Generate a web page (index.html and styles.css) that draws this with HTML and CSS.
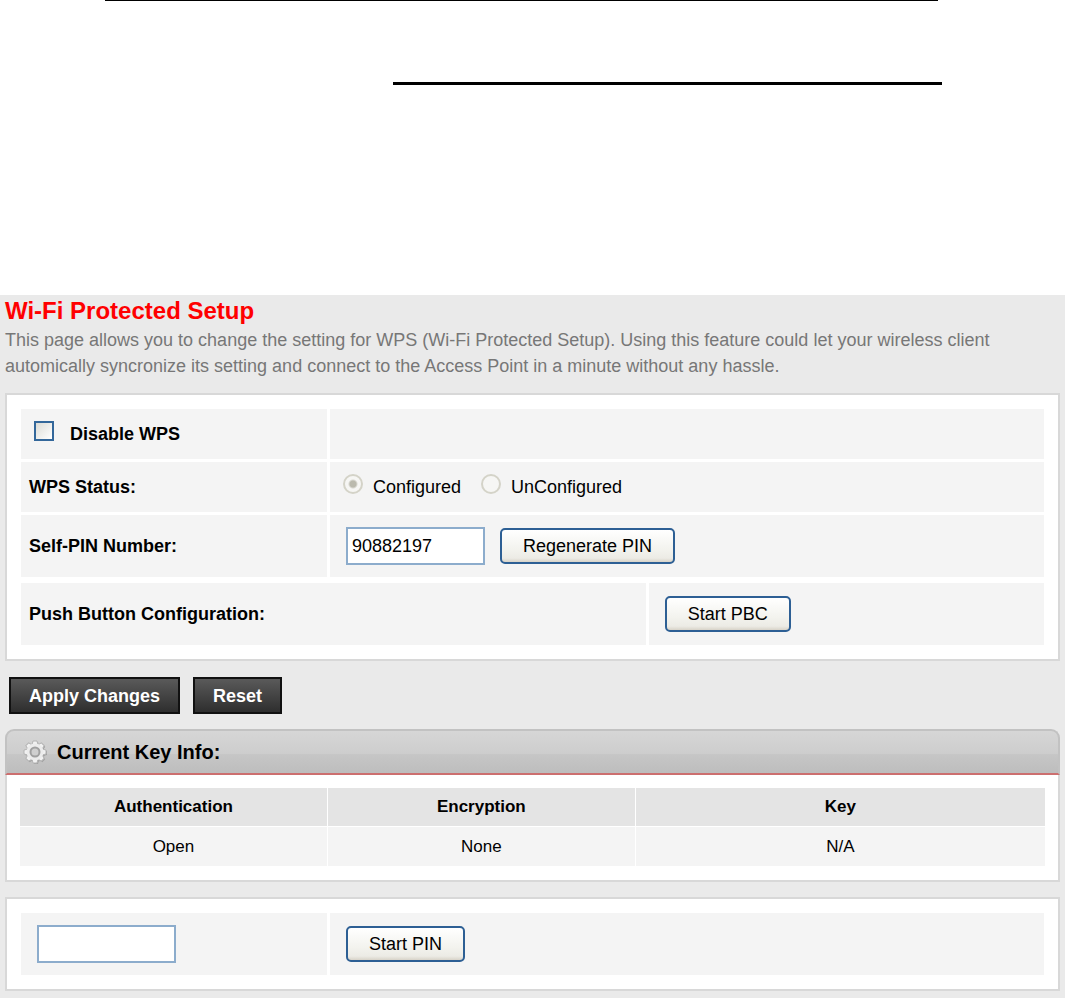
FILE: index.html
```
<!DOCTYPE html>
<html lang="en">
    <head>
        <meta charset="UTF-8">
        <title>Wi-Fi Protected Setup</title>
        <link rel="stylesheet" href="styles.css">
    </head>
    <body>
        <div class="rules">
            <hr class="rule-thin">
            <hr class="rule-thick">
        </div>
        <form class="page" onsubmit="return false">
            <h1>Wi-Fi Protected Setup</h1>
            <p class="intro">This page allows you to change the setting for WPS (Wi-Fi Protected Setup). Using this feature could let your wireless client automically syncronize its setting and connect to the Access Point in a minute without any hassle.</p>

            <div class="panel settings">
                <div class="row">
                    <div class="cell">
                        <input type="checkbox" id="disableWps" class="check">
                        <label for="disableWps" class="name">Disable WPS</label>
                    </div>
                    <div class="cell"></div>
                </div>
                <div class="row">
                    <div class="cell name">WPS Status:</div>
                    <div class="cell">
                        <input type="radio" name="config" id="configured" class="radio" checked disabled>
                        <label for="configured">Configured</label>
                        <input type="radio" name="config" id="unconfigured" class="radio" disabled>
                        <label for="unconfigured">UnConfigured</label>
                    </div>
                </div>
                <div class="row tall">
                    <div class="cell"><label for="selfPin" class="name">Self-PIN Number:</label></div>
                    <div class="cell controls">
                        <input type="text" id="selfPin" class="text" value="90882197">
                        <button type="button" class="btn">Regenerate PIN</button>
                    </div>
                </div>
                <div class="row tall push">
                    <div class="cell name">Push Button Configuration:</div>
                    <div class="cell controls">
                        <button type="button" class="btn">Start PBC</button>
                    </div>
                </div>
            </div>

            <div class="actions">
                <button type="submit" class="dark">Apply Changes</button>
                <button type="reset" class="dark">Reset</button>
            </div>

            <div class="head">
                <svg class="gear" width="26" height="26" viewBox="0 0 26 26">
                    <g fill="#a2a2a2" transform="translate(14 14)">
                        <circle r="9"/>
                        <path id="teeth" d="M-2-11h4l1 4h-6zM-2 11h4l1-4h-6zM-11-2v4l4 1v-6zM11-2v4l-4 1v-6z"/>
                        <use href="#teeth" transform="rotate(45)"/>
                    </g>
                    <g transform="translate(13 13)">
                        <path fill="#f2f2f2" stroke="#b4b4b4" d="M-2-11h4l1 4h-6zM-2 11h4l1-4h-6zM-11-2v4l4 1v-6zM11-2v4l-4 1v-6z"/>
                        <path fill="#f2f2f2" stroke="#b4b4b4" transform="rotate(45)" d="M-2-11h4l1 4h-6zM-2 11h4l1-4h-6zM-11-2v4l4 1v-6zM11-2v4l-4 1v-6z"/>
                        <circle r="8.500" fill="#ececec"/>
                        <circle r="4.500" fill="#cfcfcf" stroke="#a0a0a0" stroke-width="2"/>
                    </g>
                </svg>
                <h2>Current Key Info:</h2>
            </div>
            <div class="panel keys">
                <table>
                    <thead>
                        <tr>
                            <th>Authentication</th>
                            <th>Encryption</th>
                            <th>Key</th>
                        </tr>
                    </thead>
                    <tbody>
                        <tr>
                            <td>Open</td>
                            <td>None</td>
                            <td>N/A</td>
                        </tr>
                    </tbody>
                </table>
            </div>

            <div class="panel">
                <div class="row tall">
                    <div class="cell controls">
                        <input type="text" class="text" aria-label="Client PIN">
                    </div>
                    <div class="cell controls">
                        <button type="button" class="btn">Start PIN</button>
                    </div>
                </div>
            </div>
        </form>
    </body>
</html>
```
FILE: styles.css
```
*{
    margin: 0;
    padding: 0;
    box-sizing: border-box;
}
body{
    background-color: #fff;
    color: #000;
    font: 18px/26px "Liberation Sans", Arial, sans-serif;
}
.rules{
    height: 295px;
}
.rules hr{
    border: 0;
    background-color: #000;
}
.rules .rule-thin{
    height: 1px;
    margin: 0 127px 81px 105px;
}
.rules .rule-thick{
    height: 3px;
    margin: 0 123px 0 393px;
}
.page{
    padding: 0 5px 7px;
    background-color: #eaeaea;
}
h1{
    color: #f00;
    font-size: 24px;
    line-height: 32px;
}
.intro{
    margin-bottom: 14px;
    color: #777;
}
.panel{
    padding: 14px;
    background-color: #fff;
    border: 2px solid #d8d8d8;
}
.settings{
    display: flex;
    flex-direction: column;
    gap: 3px;
}
.row{
    display: grid;
    grid-template-columns: 3fr 7fr;
    gap: 3px;
    min-height: 50px;
}
.tall{
    min-height: 62px;
}
.push{
    grid-template-columns: 49fr 31fr;
    margin-top: 3px;
}
.cell{
    display: flex;
    align-items: center;
    padding: 0 8px;
    background-color: #f4f4f4;
}
.controls{
    gap: 15px;
    padding: 0 16px;
}
.name{
    font-weight: bold;
}
/* old style form controls */
.check{
    appearance: none;
    width: 20px;
    height: 20px;
    margin: 0 16px 6px 5px;
    background: linear-gradient(135deg, #dcdcd6, #fff);
    border: 2px solid #33679a;
}
.radio{
    appearance: none;
    width: 20px;
    height: 20px;
    margin: 0 10px 6px 5px;
    background-color: #f6f6f4;
    border: 2px solid #d4d3c8;
    border-radius: 50%;
}
.radio:checked{
    background-image: radial-gradient(circle, #bbbaae 3px, transparent 5px);
}
label + .radio{
    margin-left: 20px;
}
.text{
    width: 139px;
    height: 38px;
    padding: 0 4px;
    background-color: #fff;
    border: 2px solid #8caccc;
    font: inherit;
}
.btn{
    height: 36px;
    padding: 0 21px;
    background: linear-gradient(#fff, #f3f3ee 60%, #ecebe5 88%, #d8d3c8);
    border: 2px solid #2d5f94;
    border-radius: 5px;
    color: #000;
    font: inherit;
}
.actions{
    display: flex;
    gap: 13px;
    padding: 16px 4px 15px;
}
.dark{
    height: 37px;
    padding: 0 18px;
    background: linear-gradient(#5a5a5a, #2e2e2e);
    border: 2px solid #111;
    color: #fff;
    font: inherit;
    font-weight: bold;
}
.head{
    display: flex;
    align-items: center;
    gap: 9px;
    height: 46px;
    padding-left: 15px;
    background: linear-gradient(#d6d6d6, #cdcdcd 55%, #c6c6c6 56%, #bdbdbd);
    border: 2px solid #c2c2c2;
    border-bottom: 2px solid #cc6f6f;
    border-radius: 9px 9px 0 0;
}
h2{
    font-size: 20px;
}
.keys{
    margin-bottom: 15px;
    padding: 12px 12px 13px;
    border-top: 0;
}
table{
    width: 100%;
    table-layout: fixed;
    border-collapse: separate;
    border-spacing: 1px;
    font-size: 17px;
}
th{
    height: 38px;
    background-color: #e4e4e4;
}
th:nth-child(-n+2){
    width: 30%;
}
td{
    height: 39px;
    background-color: #f4f4f4;
    text-align: center;
}
```
